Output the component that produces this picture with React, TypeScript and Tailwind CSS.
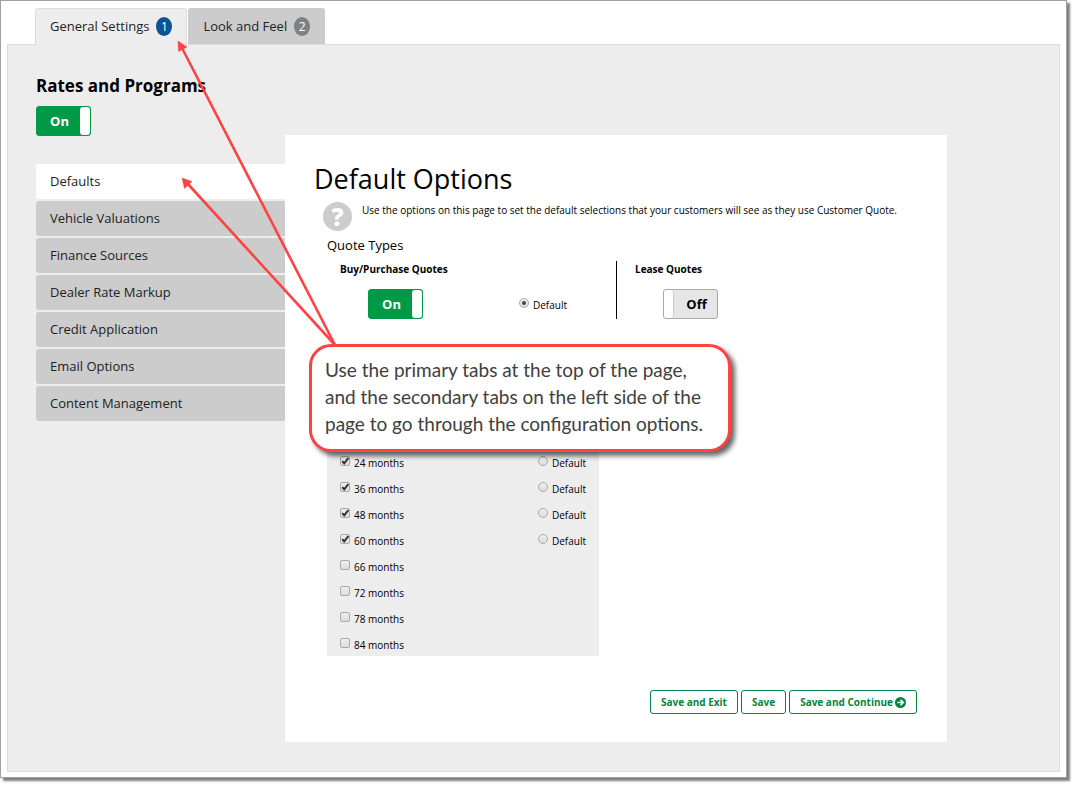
import { useState } from "react";
import clsx from "clsx";

const primaryTabs = [
  { name: "General Settings", step: 1 },
  { name: "Look and Feel", step: 2 },
];

const sections = [
  "Defaults",
  "Vehicle Valuations",
  "Finance Sources",
  "Dealer Rate Markup",
  "Credit Application",
  "Email Options",
  "Content Management",
];

const terms = [
  { months: 24, enabled: true },
  { months: 36, enabled: true },
  { months: 48, enabled: true },
  { months: 60, enabled: true },
  { months: 66, enabled: false },
  { months: 72, enabled: false },
  { months: 78, enabled: false },
  { months: 84, enabled: false },
];

function Toggle({ label, initial }: { label: string; initial: boolean }) {
  const [on, setOn] = useState(initial);
  return (
    <button
      type="button"
      role="switch"
      aria-checked={on}
      aria-label={label}
      onClick={() => setOn(!on)}
      className={clsx(
        "flex h-[30px] w-[55px] items-stretch rounded-[3px] border text-[13px] font-bold",
        on ? "border-[#009a47] bg-[#009a47] text-white" : "flex-row-reverse border-[#aaa] bg-[#e6e6e6] text-black"
      )}
    >
      <span className="flex flex-1 items-center justify-center pt-px pl-0.5">{on ? "On" : "Off"}</span>
      <span className={clsx("w-2.5 rounded-[3px] bg-white", !on && "border-r border-[#ccc]")} />
    </button>
  );
}

function Radio({ name, checked }: { name: string; checked?: boolean }) {
  return (
    <label className="flex items-start gap-1 text-[10px] leading-4">
      <span className="relative mt-px flex">
        <input
          type="radio"
          name={name}
          defaultChecked={checked}
          className="peer size-2.5 appearance-none rounded-full border border-[#aaa] bg-linear-to-b from-[#eee] to-[#ddd]"
        />
        <span className="pointer-events-none absolute inset-[3px] hidden rounded-full bg-[#444] peer-checked:block" />
      </span>
      Default
    </label>
  );
}

function TermCheckbox({ months, enabled }: { months: number; enabled: boolean }) {
  return (
    <label className="flex items-start gap-1 text-[10px] leading-4">
      <span className="relative mt-px flex">
        <input
          type="checkbox"
          defaultChecked={enabled}
          className="peer size-2.5 appearance-none rounded-[2px] border border-[#aaa] bg-linear-to-b from-[#eee] to-[#ddd]"
        />
        <svg viewBox="0 0 10 10" className="pointer-events-none absolute inset-0 hidden size-2.5 peer-checked:block">
          <path d="M2.2 5.2 4.2 7.4 8.4 2" fill="none" stroke="#333" strokeWidth="2" />
        </svg>
      </span>
      {months} months
    </label>
  );
}

function ActionButton({ children }: { children: React.ReactNode }) {
  return (
    <button
      type="button"
      className="flex h-6 items-center gap-0.5 rounded-[3px] border border-[#00853e] bg-white px-2.5 text-[10px] font-bold text-[#00853e]"
    >
      {children}
    </button>
  );
}

function Callout() {
  return (
    <>
      <svg className="pointer-events-none absolute top-0 left-0 h-[350px] w-[350px]" viewBox="0 0 350 350">
        <g stroke="#ff4343" strokeWidth="2.6" fill="#ff4343">
          <path d="M334 344 181 47" />
          <path d="M334 344 186 182" />
          <path d="M177 40 177.500 50.500 186 46Z" strokeWidth="0.500" />
          <path d="M181 177 183.500 187.500 191 180.500Z" strokeWidth="0.500" />
        </g>
      </svg>
      <div className="absolute top-[343px] left-[308px] w-[422px] rounded-[22px] border-3 border-[#ff4343] bg-white px-[13px] pt-[9px] pb-3 font-[Lato,sans-serif] text-[19px] leading-[27px] whitespace-nowrap text-[#404040] shadow-[4px_4px_5px_rgba(0,0,0,0.6)]">
        Use the primary tabs at the top of the page,
        <br />
        and the secondary tabs on the left side of the
        <br />
        page to go through the configuration options.
      </div>
    </>
  );
}

export default function App() {
  const [tab, setTab] = useState(0);
  const [section, setSection] = useState(0);

  return (
    <div className="bg-white pr-[7px] pb-[7px] font-['Open_Sans',sans-serif] text-black">
      <div className="relative border border-[#a0a0a0] bg-white px-1.5 pt-[7px] pb-[5px] shadow-[3px_3px_2px_rgba(0,0,0,0.5)]">
        <div role="tablist" className="flex gap-px pl-7">
          {primaryTabs.map((t, i) => (
            <button
              key={t.name}
              type="button"
              role="tab"
              aria-selected={tab === i}
              onClick={() => setTab(i)}
              className={clsx(
                "flex items-center gap-[7px] rounded-t-[3px] border border-b-0 px-3.5 text-[13px] text-[#222]",
                tab === i ? "relative -mb-px h-[37px] border-[#ddd] bg-[#ededed] pb-px" : "h-9 border-[#ccc] bg-[#ccc]"
              )}
            >
              {t.name}
              <span
                className={clsx(
                  "flex h-[19px] w-4 items-center justify-center rounded-[50%] text-[12px] text-white",
                  tab === i ? "bg-[#0b5394]" : "bg-[#808080]"
                )}
              >
                {t.step}
              </span>
            </button>
          ))}
        </div>

        <div className="flex items-start border border-[#ddd] bg-[#ededed] pr-28 pb-[29px] pl-7">
          <aside className="w-[249px] shrink-0 pt-[31px]">
            <h2 className="text-[17px] leading-5 font-bold">Rates and Programs</h2>
            <div className="mt-2.5">
              <Toggle label="Rates and Programs" initial />
            </div>
            <nav className="mt-7 flex flex-col gap-0.5">
              {sections.map((s, i) => (
                <a
                  key={s}
                  href="#"
                  onClick={() => setSection(i)}
                  className={clsx(
                    "flex h-[35px] items-center rounded-l-[3px] px-3.5 text-[13px] text-[#222]",
                    section === i ? "bg-white" : "bg-[#ccc]"
                  )}
                >
                  {s}
                </a>
              ))}
            </nav>
          </aside>

          <main className="mt-[90px] min-w-0 flex-1 bg-white pt-7 pr-[30px] pb-7 pl-[29px]">
            <h1 className="text-[27px] leading-8">Default Options</h1>
            <div className="mt-[7px] flex items-start gap-2.5 pl-[9px]">
              <span className="flex size-[29px] shrink-0 items-center justify-center rounded-full bg-[#ccc] text-[24px] font-extrabold text-white">
                ?
              </span>
              <p className="text-[10px] leading-4">
                Use the options on this page to set the default selections that your customers will see as they use
                Customer Quote.
              </p>
            </div>

            <section className="pl-[13px]">
              <h2 className="mt-1 text-[13px] leading-5">Quote Types</h2>
              <div className="mt-1.5 flex items-stretch">
                <div className="w-[290px] border-r border-black pl-[13px]">
                  <h3 className="text-[10px] leading-4 font-bold">Buy/Purchase Quotes</h3>
                  <div className="mt-3 flex items-end gap-24 pl-7">
                    <Toggle label="Buy/Purchase Quotes" initial />
                    <div className="pb-1.5">
                      <Radio name="quote-type" checked />
                    </div>
                  </div>
                </div>
                <div className="pl-[18px]">
                  <h3 className="text-[10px] leading-4 font-bold">Lease Quotes</h3>
                  <div className="mt-3 pl-7">
                    <Toggle label="Lease Quotes" initial={false} />
                  </div>
                </div>
              </div>

              <div className="mt-32 flex w-[272px] flex-col gap-2.5 bg-[#ededed] px-[13px] pt-2 pb-[3px]">
                {terms.map((t) => (
                  <div key={t.months} className="flex items-start justify-between">
                    <TermCheckbox {...t} />
                    {t.enabled && <Radio name="term" />}
                  </div>
                ))}
              </div>
            </section>

            <div className="mt-[34px] flex justify-end gap-[3px]">
              <ActionButton>Save and Exit</ActionButton>
              <ActionButton>Save</ActionButton>
              <ActionButton>
                Save and Continue
                <svg viewBox="0 0 12 12" className="size-[11px]">
                  <circle cx="6" cy="6" r="6" fill="#00853e" />
                  <path d="M2.500 6H8.500M6 3 9 6 6 9" fill="none" stroke="#fff" strokeWidth="1.800" />
                </svg>
              </ActionButton>
            </div>
          </main>
        </div>

        <Callout />
      </div>
    </div>
  );
}
